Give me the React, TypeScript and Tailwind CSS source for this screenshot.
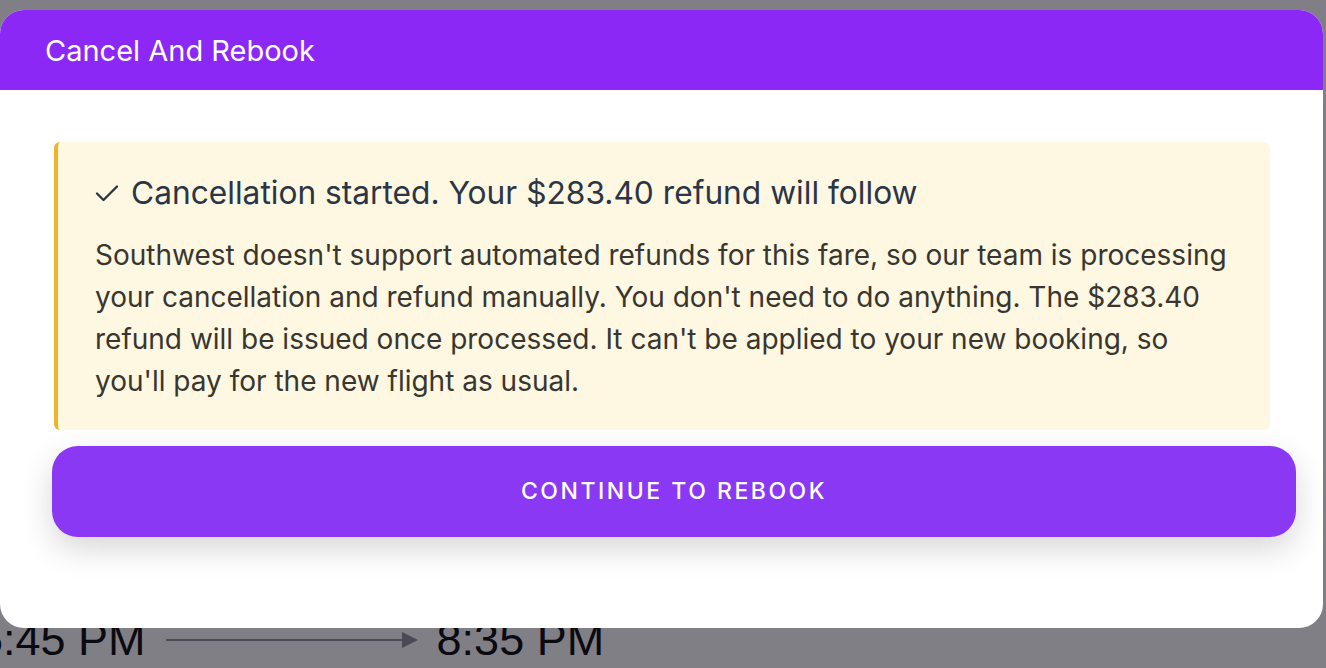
import React from 'react';

const CheckIcon = () => (
  <svg width="24" height="18" viewBox="0 0 24 18" fill="none" stroke="currentColor" strokeWidth="2.3" strokeLinecap="round" strokeLinejoin="round" className="shrink-0">
    <path d="M2 9.5l6.5 6.5L22 2.5" />
  </svg>
);

const TimeRow = () => (
  <div className="flex items-center -ml-[22px] text-[45px] leading-none text-[#0b0a10]" style={{ fontFamily: '"Liberation Sans", Arial, sans-serif' }}>
    <span>5:45 PM</span>
    <div className="flex items-center ml-[20px] mr-[19px]">
      <div className="w-[236px] h-[2px] bg-[#4b4955]" />
      <div className="w-0 h-0 border-y-[8px] border-y-transparent border-l-[16px] border-l-[#4b4955]" />
    </div>
    <span>8:35 PM</span>
  </div>
);

export default function App() {
  return (
    <div className="relative w-full h-[668px] overflow-hidden bg-[#807f86]" style={{ fontFamily: 'Inter, "Noto Sans", sans-serif' }}>
      {/* page behind the dialog */}
      <div className="pt-[617px]">
        <TimeRow />
      </div>

      {/* dialog */}
      <div className="absolute left-0 top-[10px] w-[1323px] h-[618px] bg-white rounded-[24px] overflow-hidden flex flex-col">
        <div className="h-[80px] shrink-0 bg-[#8c28f6] flex items-center pl-[45px]">
          <h2 className="text-white text-[29px] leading-none font-normal">Cancel And Rebook</h2>
        </div>

        <div className="flex flex-col pt-[52px]">
          <div className="ml-[54px] mr-[53px] h-[288px] bg-[#fef7e2] border-l-4 border-[#f0b42a] rounded-[6px] pl-[37px] pr-[30px] pt-[31px]">
            <div className="flex items-center gap-[12px] h-[40px] text-[#2a3546] text-[31.7px] font-normal">
              <CheckIcon />
              <span>Cancellation started. Your $283.40 refund will follow</span>
            </div>
            <p className="mt-[21px] text-[28px] leading-[42px] text-[#38362f]">
              Southwest doesn't support automated refunds for this fare, so our team is processing your cancellation and refund manually. You don't need to do anything. The $283.40 refund will be issued once processed. It can't be applied to your new booking, so you'll pay for the new flight as usual.
            </p>
          </div>

          <button className="mt-[16px] ml-[52px] mr-[27px] h-[91px] rounded-[26px] bg-[#8a38f3] text-white text-[23px] font-medium tracking-[0.11em] shadow-[0_12px_32px_rgba(0,0,0,0.16)]">
            CONTINUE TO REBOOK
          </button>
        </div>
      </div>
    </div>
  );
}
